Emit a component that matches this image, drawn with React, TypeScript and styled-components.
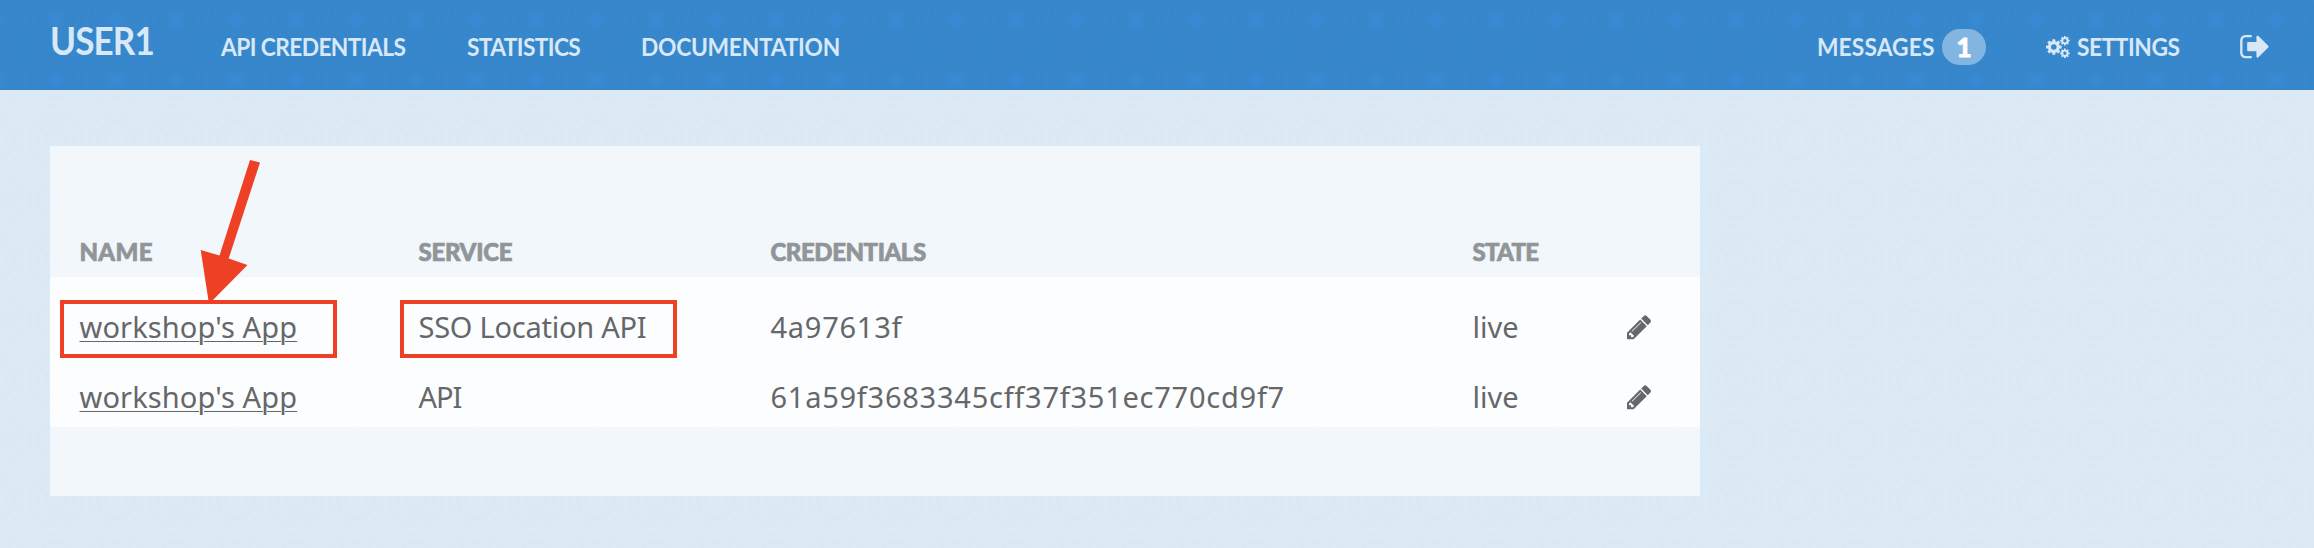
import React from 'react';
import styled, { createGlobalStyle } from 'styled-components';

const ripple = (core: string, ring: string) => `radial-gradient(circle at 30px 30px,
  ${core} 0 4px, transparent 9px, ${ring} 10px, transparent 12px 16px,
  ${ring} 18px, transparent 20px 24px, ${ring} 26px, transparent 28px)`;

const Global = createGlobalStyle`
  * { box-sizing: border-box; }
  body { margin: 0; background: #dceaf5; font-family: 'Noto Sans', sans-serif; color: #666769; }
`;

const Page = styled.div`
  height: 548px;
  background-color: #dceaf5;
  background-image: ${ripple('rgba(218,234,247,0.2)', 'rgba(205,224,238,0.2)')};
  background-size: 60px 60px;
  background-position: 26px 50px;
`;

const Header = styled.header`
  display: flex;
  height: 90px;
  padding: 0 45px 0 50px;
  color: #d8e8f7;
  background-color: #3787cd;
  background-image: ${ripple('rgba(56,139,215,0.65)', 'rgba(55,130,194,0.4)')};
  background-size: 60px 60px;
  background-position: 26px 50px;
  font-family: Lato, sans-serif;
  font-weight: 700;
`;

const Brand = styled.div`
  width: 171px;
  padding-top: 16px;
  font-size: 39px;
  line-height: 48px;
  letter-spacing: -1px;
  transform: scaleX(0.9);
  transform-origin: left;
`;

const NavItem = styled.a<{ $width: number }>`
  display: flex;
  flex-shrink: 0;
  align-items: center;
  width: ${p => p.$width}px;
  height: 93px;
  font-size: 24.5px;
  white-space: nowrap;
`;

const NavLabel = styled.span<{ $spacing: number }>`
  min-width: 0;
  letter-spacing: ${p => p.$spacing}px;
  transform: scaleX(0.93);
  transform-origin: left;
`;

const MessagesLabel = styled(NavLabel)`
  width: 119px;
`;

const AccountNav = styled.nav`
  display: flex;
  margin-left: auto;
`;

const MessagesItem = styled(NavItem)`
  margin-right: 59px;
`;

const Badge = styled.span`
  display: flex;
  flex-shrink: 0;
  align-items: center;
  justify-content: center;
  width: 44px;
  height: 36px;
  margin-left: auto;
  border-radius: 18px;
  background: #82b5e1;
  color: #fff;
  font-size: 26px;
  font-weight: 900;
  -webkit-text-stroke: 0.8px #fff;
`;

const Cogs = styled.svg`
  flex-shrink: 0;
  width: 24px;
  height: 22px;
  margin: 0 7px 0 1px;
  fill: currentColor;
`;

const Glyph = styled.svg<{ $size: number }>`
  display: block;
  flex-shrink: 0;
  width: ${p => p.$size}px;
  height: ${p => p.$size}px;
  fill: currentColor;
`;

const Panel = styled.main`
  position: relative;
  width: 1650px;
  height: 350px;
  margin: 56px 0 0 50px;
  padding-top: 86px;
  background: rgba(255, 255, 255, 0.61);
`;

const Row = styled.div`
  display: grid;
  grid-template-columns: 339px 352px 702px 154px 1fr;
  align-items: center;
  height: 70px;
  padding-left: 29.5px;
  font-size: 29px;
  white-space: nowrap;
`;

const HeadRow = styled(Row)`
  height: 45px;
  padding-bottom: 6px;
  color: #919598;
  font-family: Lato, sans-serif;
  font-size: 24px;
  font-weight: 900;
  -webkit-text-stroke: 0.7px #919598;
`;

const Body = styled.div`
  height: 150px;
  padding-top: 15px;
  background: #fcfdfe;
`;

const Text = styled.span<{ $spacing?: number }>`
  letter-spacing: ${p => p.$spacing ?? 0}px;
`;

const Cell = styled(Text)`
  padding-bottom: 2px;
`;

const AppLink = styled.a`
  justify-self: start;
  padding-bottom: 2px;
  letter-spacing: 0.12px;
  text-decoration: underline;
  text-decoration-thickness: 1px;
  text-underline-offset: 3px;
`;

const Marker = styled.div<{ $left: number; $width: number }>`
  position: absolute;
  top: 154px;
  left: ${p => p.$left}px;
  width: ${p => p.$width}px;
  height: 58px;
  border: 4px solid #ed4024;
`;

const Arrow = styled.svg`
  position: absolute;
  top: 10px;
  left: 145px;
  width: 70px;
  height: 152px;
`;

const gear = (cx: number, cy: number, outer: number, hole: number) => {
  const inner = outer * 0.76;
  const teeth = 8;
  const points: string[] = [];
  for (let i = 0; i < teeth; i++) {
    const a = (i * 2 * Math.PI) / teeth;
    [[-0.26, inner], [-0.18, outer], [0.18, outer], [0.26, inner]].forEach(([d, r]) =>
      points.push(`${(cx + r * Math.cos(a + d)).toFixed(2)} ${(cy + r * Math.sin(a + d)).toFixed(2)}`));
  }
  return `M${points.join('L')}ZM${cx - hole} ${cy}a${hole} ${hole} 0 1 0 ${hole * 2} 0a${hole} ${hole} 0 1 0 ${-hole * 2} 0Z`;
};

const CogsIcon = () => (
  <Cogs viewBox="0 0 24 22">
    <path fillRule="evenodd" d={gear(7.8, 11, 7.9, 2.8) + gear(18.9, 4.7, 4.8, 1.7) + gear(18.9, 17.3, 4.8, 1.7)} />
  </Cogs>
);

const PencilIcon = () => (
  <Glyph $size={28.4} viewBox="128 0 1792 1792">
    <path d="M491 1536l91-91-235-235-91 91v107h128v128h107zm523-928q0-22-22-22-10 0-17 7l-542 542q-7 7-7 17 0 22 22 22 10 0 17-7l542-542q7-7 7-17zm-54-192l416 416-832 832h-416v-416zm683 96q0 53-37 90l-166 166-416-416 166-165q36-38 90-38 53 0 91 38l235 234q37 39 37 91z" />
  </Glyph>
);

const SignOutIcon = () => (
  <Glyph $size={32.5} viewBox="0 -20 1792 1792">
    <path d="M704 1440q0 4 1 20t.5 26.5-3 23.5-10 19.5-20.5 6.5h-320q-119 0-203.5-84.5t-84.5-203.5v-704q0-119 84.5-203.5t203.5-84.5h320q13 0 22.5 9.5t9.5 22.5q0 4 1 20t.5 26.5-3 23.5-10 19.5-20.5 6.5h-320q-66 0-113 47t-47 113v704q0 66 47 113t113 47h312l11.5 1 11.5 3 8 5.5 7 9 2 13.5zm928-544q0 26-19 45l-544 544q-19 19-45 19t-45-19-19-45v-288h-448q-26 0-45-19t-19-45v-384q0-26 19-45t45-19h448v-288q0-26 19-45t45-19 45 19l544 544q19 19 19 45z" />
  </Glyph>
);

const rows = [
  { name: "workshop's App", service: 'SSO Location API', spacing: -0.25, key: '4a97613f', state: 'live' },
  { name: "workshop's App", service: 'API', spacing: -1, key: '61a59f3683345cff37f351ec770cd9f7', state: 'live' },
];

export default function App() {
  return (
    <Page>
      <Global />
      <Header>
        <Brand>USER1</Brand>
        <NavItem $width={246}><NavLabel $spacing={-0.67}>API CREDENTIALS</NavLabel></NavItem>
        <NavItem $width={174}><NavLabel $spacing={-0.7}>STATISTICS</NavLabel></NavItem>
        <NavItem $width={220}><NavLabel $spacing={-0.3}>DOCUMENTATION</NavLabel></NavItem>
        <AccountNav>
          <MessagesItem $width={169}>
            <MessagesLabel $spacing={0.1}>MESSAGES</MessagesLabel>
            <Badge>1</Badge>
          </MessagesItem>
          <NavItem $width={194}>
            <CogsIcon />
            <NavLabel $spacing={-0.5}>SETTINGS</NavLabel>
          </NavItem>
          <NavItem $width={30}><SignOutIcon /></NavItem>
        </AccountNav>
      </Header>
      <Panel>
        <HeadRow>
          <Text $spacing={0.3}>NAME</Text>
          <Text $spacing={-0.3}>SERVICE</Text>
          <Text $spacing={-0.45}>CREDENTIALS</Text>
          <Text $spacing={-0.75}>STATE</Text>
        </HeadRow>
        <Body>
          {rows.map(r => (
            <Row key={r.key}>
              <AppLink>{r.name}</AppLink>
              <Cell $spacing={r.spacing}>{r.service}</Cell>
              <Cell $spacing={0.75}>{r.key}</Cell>
              <Cell>{r.state}</Cell>
              <PencilIcon />
            </Row>
          ))}
        </Body>
        <Marker $left={10} $width={277} />
        <Marker $left={350} $width={277} />
        <Arrow viewBox="0 0 70 152">
          <path d="M55 4L65 6.5L33.7 102.5L52.5 109L14 148L5.7 94L24.5 99.5Z" fill="#ed4024" />
        </Arrow>
      </Panel>
    </Page>
  );
}
